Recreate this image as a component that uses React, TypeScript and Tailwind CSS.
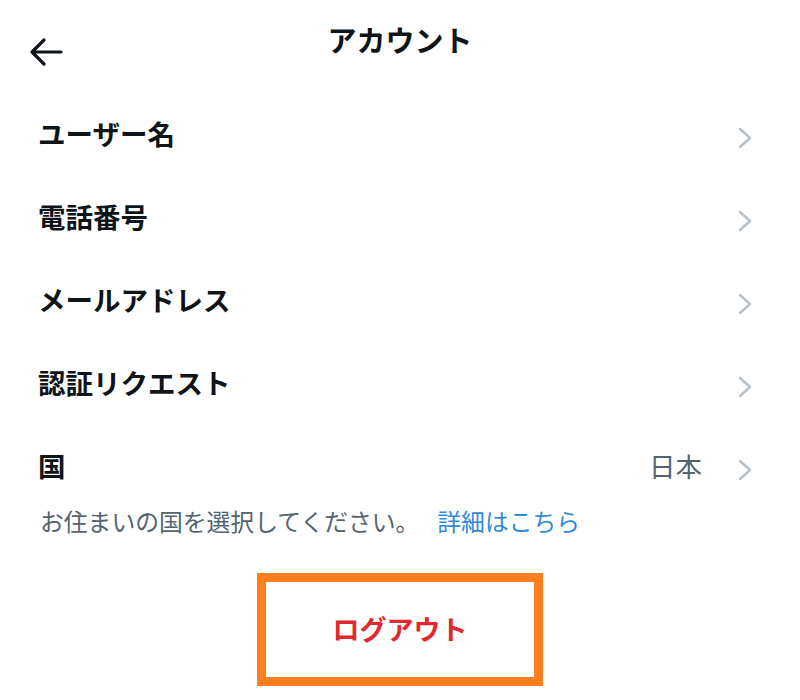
const ROWS = ["ユーザー名", "電話番号", "メールアドレス", "認証リクエスト"]

function Chevron() {
  return (
    <svg width="16" height="22" viewBox="0 0 16 22" fill="none" className="mt-[8px] shrink-0">
      <path d="M3 2 L13 11 L3 20" stroke="#b6c0c9" strokeWidth="2.4" strokeLinecap="round" strokeLinejoin="round" />
    </svg>
  )
}

function BackArrow() {
  return (
    <svg width="34" height="30" viewBox="0 0 34 30" fill="none">
      <path d="M32 15 H4 M15 3 L3 15 L15 27" stroke="#0f1419" strokeWidth="3.2" strokeLinecap="round" strokeLinejoin="round" />
    </svg>
  )
}

function Row({ label, value }: { label: string; value?: string }) {
  return (
    <div className="flex h-[83px] items-center justify-between pl-[38px] pr-[47px]">
      <span className="text-[27.5px] font-bold text-[#0f1419]">{label}</span>
      <div className="flex items-center gap-[35px]">
        {value && <span className="text-[26.5px] text-[#536471]">{value}</span>}
        <Chevron />
      </div>
    </div>
  )
}

export default function App() {
  return (
    <div
      className="h-[700px] w-[800px] overflow-hidden bg-white"
      style={{ fontFamily: '"Noto Sans CJK JP", "Noto Sans", sans-serif' }}
    >
      <header className="relative h-[92px]">
        <button className="absolute left-[29px] top-[37px]">
          <BackArrow />
        </button>
        <h1 className="pt-[19px] text-center text-[29px] leading-[40px] font-bold text-[#0f1419]">アカウント</h1>
      </header>

      {ROWS.map((r) => (
        <Row key={r} label={r} />
      ))}
      <Row label="国" value="日本" />

      <p className="pl-[40px] text-[23.8px] leading-[28px] text-[#536471]">
        お住まいの国を選択してください。
        <span className="ml-[18px] text-[#2f8ad8]">詳細はこちら</span>
      </p>

      <div className="mt-[38px] flex justify-center">
        <button className="flex h-[113px] w-[286px] items-center justify-center border-[9px] border-[#fd7e1f] text-[27px] font-bold text-[#e0282e]">
          ログアウト
        </button>
      </div>
    </div>
  )
}
